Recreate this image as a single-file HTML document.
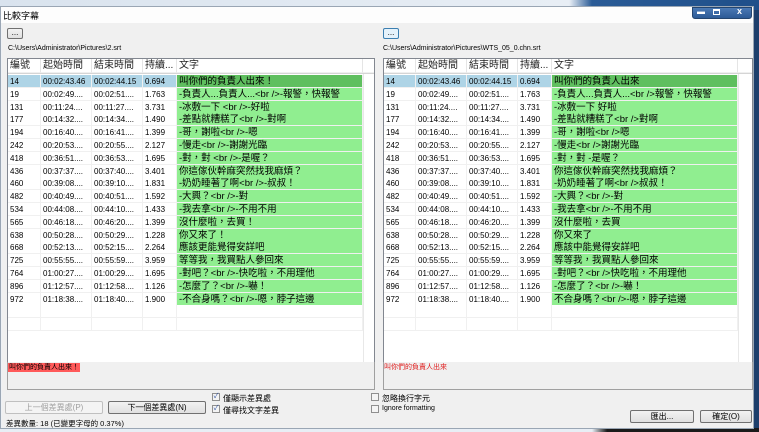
<!DOCTYPE html>
<html><head><meta charset="utf-8"><style>
*{margin:0;padding:0;box-sizing:border-box}
body{width:759px;height:432px;overflow:hidden;background:#1d3f6c;font-family:"Liberation Sans","Noto Sans CJK TC",sans-serif;font-size:8px;color:#000;position:relative}
.a{position:absolute}
.btn{position:absolute;border:1px solid #707070;border-radius:2px;background:linear-gradient(#f2f2f2,#e0e0e0);text-align:center;font-size:8px;line-height:11px}
.cb{position:absolute;width:8px;height:8px;border:1px solid #8f8f8f;background:#f4f4f4;font-size:7px;line-height:6px;color:#2a4ea0;text-align:center}
.grid{position:absolute;background:#fff;border:1px solid #828790;overflow:hidden}
.c{position:absolute;white-space:nowrap;overflow:hidden;height:13px;line-height:13px;padding-left:2px;font-size:8px;border-right:1px solid #f0f0f0;border-bottom:1px solid #f0f0f0}
.h{font-size:10px;color:#222;background:#fff;border-right:1px solid #e5e5e5;height:14px;line-height:14px}
</style></head><body>
<div class="a" style="left:0;top:0;width:759px;height:10px;background:linear-gradient(90deg,#d9e3ee 0,#e8eef5 75%,#2a5b96 78%,#1f4f8a 100%)"></div>
<div class="a" style="left:0;top:428px;width:759px;height:4px;background:linear-gradient(90deg,#e8eef5 0,#e8eef5 78%,#1a1a1a 80%)"></div>
<div class="a" style="left:0;top:6px;width:754px;height:423px;background:#eef1f5;border:1px solid #9aa6b4"></div>
<div class="a" style="left:1px;top:7px;width:752px;height:16px;background:#fdfdfd;"></div>
<div class="a" style="left:3px;top:9px;font-size:9px;">比較字幕</div>
<div class="a" style="left:692px;top:7px;width:60px;height:12px;background:linear-gradient(#4a79b5,#2c5a96);border-radius:0 0 3px 3px;border:1px solid #24456f"></div>
<div class="a" style="left:697px;top:7px;color:#fff;font-size:8px;font-weight:bold">▬</div>
<div class="a" style="left:713px;top:9px;width:7px;height:6px;border:1px solid #fff;border-top-width:2px"></div>
<div class="a" style="left:737px;top:6px;color:#fff;font-size:9px;font-weight:bold">x</div>
<div class="a" style="left:2px;top:23px;width:751px;height:405px;background:#f0f0f0"></div>
<div class="btn" style="left:7px;top:28px;width:16px;height:11px;line-height:8px">...</div>
<div class="btn" style="left:383px;top:28px;width:16px;height:11px;line-height:8px;border-color:#3c7fb1;background:#e5f2fb">...</div>
<div class="a" style="left:8px;top:45px;font-size:7px">C:\Users\Administrator\Pictures\2.srt</div>
<div class="a" style="left:383px;top:45px;font-size:7px">C:\Users\Administrator\Pictures\WTS_05_0.chn.srt</div>
<div class="grid" id="g1" style="left:7px;top:58px;width:368px;height:305px"></div>
<div class="grid" id="g2" style="left:383px;top:58px;width:370px;height:305px"></div>
<div class="a" style="left:7px;top:362px;width:368px;height:28px;background:#f0f0f0;border:1px solid #a0a0a0;border-top:none"></div>
<div class="a" style="left:383px;top:362px;width:370px;height:28px;background:#f0f0f0;border:1px solid #a0a0a0;border-top:none"></div>
<div class="a" style="left:8px;top:363px;background:#ff5a5a;font-size:7px;line-height:9px;padding:0 1px">叫你們的負責人出來！</div>
<div class="a" style="left:384px;top:363px;color:#e02020;font-size:7px;line-height:9px">叫你們的負責人出來</div>
<div class="btn" style="left:5px;top:401px;width:98px;height:13px;color:#a0a0a0;border-color:#c0c0c0;background:#f4f4f4">上一個差異處(P)</div>
<div class="btn" style="left:108px;top:401px;width:98px;height:13px">下一個差異處(N)</div>
<div class="cb" style="left:212px;top:393px">✓</div><div class="a" style="left:223px;top:393px">僅顯示差異處</div>
<div class="cb" style="left:212px;top:405px">✓</div><div class="a" style="left:223px;top:405px">僅尋找文字差異</div>
<div class="cb" style="left:371px;top:393px"></div><div class="a" style="left:382px;top:393px">忽略換行字元</div>
<div class="cb" style="left:371px;top:405px"></div><div class="a" style="left:382px;top:405px;font-size:7px">Ignore formatting</div>
<div class="btn" style="left:630px;top:410px;width:64px;height:13px">匯出...</div>
<div class="btn" style="left:700px;top:410px;width:52px;height:13px">確定(O)</div>
<div class="a" style="left:6px;top:418px;font-size:7.5px">差異數量: 18 (已變更字母的 0.37%)</div>
<script>
var d=[["14","00:02:43.46","00:02:44.15","0.694","叫你們的負責人出來！","叫你們的負責人出來"],
["19","00:02:49....","00:02:51....","1.763","-負責人...負責人...<br />-報警，快報警","-負責人...負責人...<br />報警，快報警"],
["131","00:11:24....","00:11:27....","3.731","-冰敷一下 <br />-好啦","-冰敷一下 好啦"],
["177","00:14:32....","00:14:34....","1.490","-差點就糟糕了<br />-對啊","-差點就糟糕了<br />對啊"],
["194","00:16:40....","00:16:41....","1.399","-哥，謝啦<br />-嗯","-哥，謝啦<br />嗯"],
["242","00:20:53....","00:20:55....","2.127","-慢走<br />-謝謝光臨","-慢走<br />謝謝光臨"],
["418","00:36:51....","00:36:53....","1.695","-對，對 <br />-是喔？","-對，對 -是喔？"],
["436","00:37:37....","00:37:40....","3.401","你這傢伙幹麻突然找我麻煩？","你這傢伙幹麻突然找我麻煩？"],
["460","00:39:08....","00:39:10....","1.831","-奶奶睡著了啊<br />-叔叔！","-奶奶睡著了啊<br />叔叔！"],
["482","00:40:49....","00:40:51....","1.592","-大興？<br />-對","-大興？<br />-對"],
["534","00:44:08....","00:44:10....","1.433","-我去拿<br />-不用不用","-我去拿<br />-不用不用"],
["565","00:46:18....","00:46:20....","1.399","沒什麼啦，去買！","沒什麼啦，去買"],
["638","00:50:28....","00:50:29....","1.228","你又來了！","你又來了"],
["668","00:52:13....","00:52:15....","2.264","應該更能覺得安詳吧","應該中能覺得安詳吧"],
["725","00:55:55....","00:55:59....","3.959","等等我，我買點人參回來","等等我，我買點人參回來"],
["764","01:00:27....","01:00:29....","1.695","-對吧？<br />-快吃啦，不用理他","-對吧？<br />快吃啦，不用理他"],
["896","01:12:57....","01:12:58....","1.126","-怎麼了？<br />-嚇！","-怎麼了？<br />-嚇！"],
["972","01:18:38....","01:18:40....","1.900","-不合身嗎？<br />-嗯，脖子這邊","不合身嗎？<br />-嗯，脖子這邊"]];
function esc(s){return s.replace(/</g,"&lt;").replace(/>/g,"&gt;")}
function build(id,xs,ti){
 var g=document.getElementById(id),h="",W=xs[5];
 var hd=["編號","起始時間","結束時間","持續...","文字"];
 for(var i=0;i<5;i++)h+='<div class="c h" style="left:'+xs[i]+'px;top:0;width:'+(xs[i+1]-xs[i])+'px">'+hd[i]+'</div>';
 h+='<div class="c h" style="left:'+W+'px;top:0;width:30px"></div>';
 h+='<div class="a" style="left:0;top:14px;width:400px;height:1px;background:#d5d5d5"></div>';
 for(var r=0;r<20;r++){
  var y=16+r*12.8,row=d[r];
  for(var i=0;i<5;i++){
   var bg="#fff",t="";
   if(row){t=i==4?esc(row[ti]):row[i];
    if(i==4)bg=r==0?"#5fbf5f":"#90ee90"; else if(r==0)bg="#aed4e6";}
   h+='<div class="c" style="left:'+xs[i]+'px;top:'+y+'px;width:'+(xs[i+1]-xs[i])+'px;background:'+bg+';'+(i==4?'font-size:9.5px;':'')+'">'+t+'</div>';
  }
 }
 h+='<div class="a" style="left:'+W+'px;top:15px;width:30px;height:300px;border-left:1px solid #e8e8e8"></div>';
 g.innerHTML=h;
}
build("g1",[0,33,84,135,169,355],4);
build("g2",[0,32,83,134,168,354],5);
</script>
</body></html>
